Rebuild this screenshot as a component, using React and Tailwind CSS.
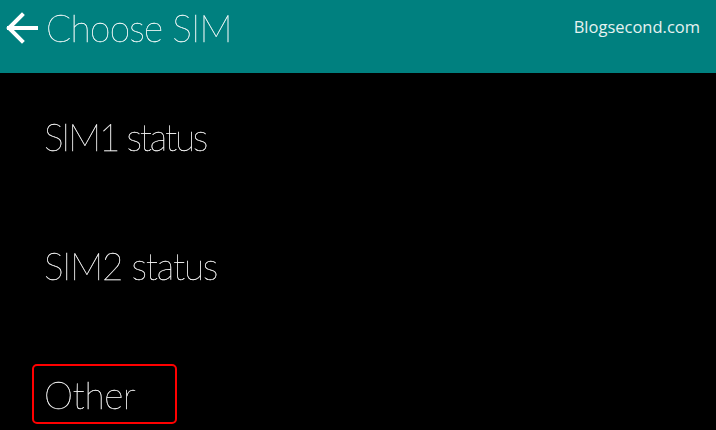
export default function App() {
  const thin = { fontFamily: "Lato, 'Open Sans', sans-serif" };
  return (
    <div className="w-[716px] h-[430px] bg-black overflow-hidden flex flex-col antialiased">
      <div className="h-[73px] bg-[#00807f] flex items-start justify-between shrink-0">
        <div className="flex items-center pl-[6px] pt-[7px] gap-[8px]">
          <svg width="32" height="34" viewBox="0 0 32 34" fill="none" stroke="white" strokeWidth="4" strokeLinecap="square">
            <path d="M3 17 H30" />
            <path d="M16 4 L3 17 L16 30" />
          </svg>
          <span className="text-[37px] leading-[42px] font-thin text-white tracking-[-0.7px] will-change-transform [-webkit-text-stroke:0.3px_white]" style={thin}>Choose SIM</span>
        </div>
        <span className="text-[16.5px] text-[#e6f2f1] pt-[15px] pr-[16px]" style={{ fontFamily: "'Open Sans', sans-serif" }}>Blogsecond.com</span>
      </div>
      <div className="flex flex-col pl-[44px] text-white">
        <div className="h-[130px] flex items-center pb-[4px]">
          <span className="text-[37px] font-thin leading-none tracking-[-2.2px] will-change-transform [-webkit-text-stroke:0.3px_white]" style={thin}>SIM1 status</span>
        </div>
        <div className="h-[130px] flex items-center pb-[6px]">
          <span className="text-[37px] font-thin leading-none tracking-[-1.2px] will-change-transform [-webkit-text-stroke:0.3px_white]" style={thin}>SIM2 status</span>
        </div>
      </div>
      <div className="pl-[32px] pt-[31px]">
        <div className="w-[145px] h-[60px] border-2 border-[#ff0000] rounded-[5px] flex items-center pl-[10px]">
          <span className="text-[37px] font-thin leading-none text-white tracking-[-0.3px] will-change-transform [-webkit-text-stroke:0.3px_white]" style={thin}>Other</span>
        </div>
      </div>
    </div>
  );
}
